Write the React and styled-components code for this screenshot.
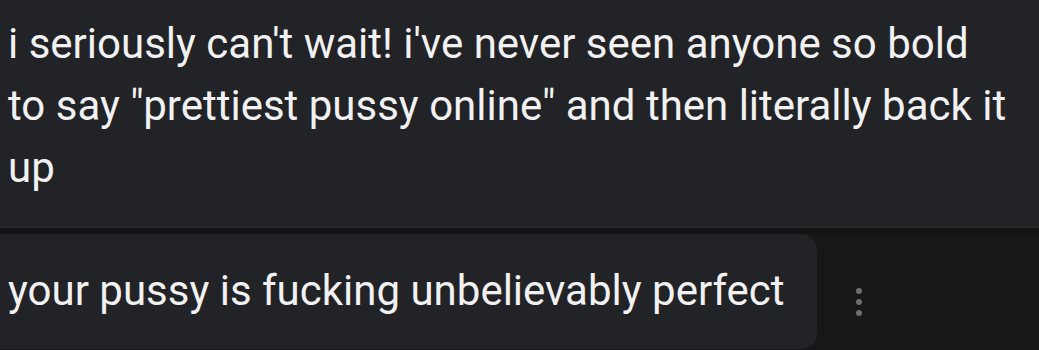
import styled, { createGlobalStyle } from "styled-components";

const GlobalStyle = createGlobalStyle`
  html, body {
    margin: 0;
    padding: 0;
    background: #161619;
  }
  body {
    font-family: Roboto, "Noto Sans", "Liberation Sans", sans-serif;
    overflow: hidden;
  }
`;

const Thread = styled.div`
  width: 1039px;
  height: 350px;
  display: flex;
  flex-direction: column;
  gap: 6px;
  background: #141417;
  overflow: hidden;
`;

const TopBubble = styled.div`
  background: #222327;
  padding: 13px 20px 28px 8px;
  border-bottom: 1px solid #28292d;
`;

const MessageText = styled.p`
  margin: 0;
  color: #f1f1f1;
  font-size: 42px;
  line-height: 62px;
  white-space: pre-line;
`;

const Row = styled.div`
  flex: 1;
  display: flex;
  align-items: flex-start;
  background: #17171a;
`;

const Bubble = styled.div`
  width: 817px;
  height: 115px;
  box-sizing: border-box;
  background: #222327;
  border-radius: 0 16px 16px 0;
  padding: 26px 0 0 8px;
`;

const SingleLine = styled(MessageText)`
  white-space: nowrap;
`;

const MenuButton = styled.div`
  display: flex;
  flex-direction: column;
  gap: 5px;
  margin: 54px 0 0 39px;
`;

const Dot = styled.span`
  width: 6px;
  height: 6px;
  border-radius: 50%;
  background: #6a6d72;
`;

export default function App() {
  return (
    <>
      <GlobalStyle />
      <Thread>
        <TopBubble>
          <MessageText>
            {"i seriously can't wait! i've never seen anyone so bold\nto say \"prettiest pussy online\" and then literally back it\nup"}
          </MessageText>
        </TopBubble>
        <Row>
          <Bubble>
            <SingleLine>your pussy is fucking unbelievably perfect</SingleLine>
          </Bubble>
          <MenuButton>
            <Dot />
            <Dot />
            <Dot />
          </MenuButton>
        </Row>
      </Thread>
    </>
  );
}
